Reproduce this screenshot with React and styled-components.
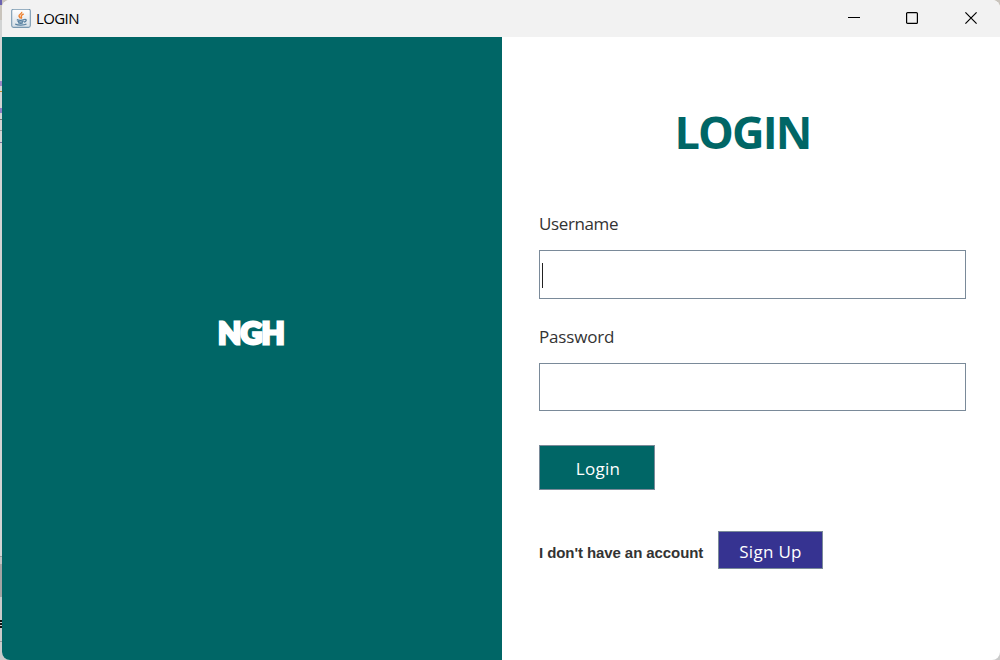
import React from 'react';
import styled, { createGlobalStyle } from 'styled-components';

const GlobalStyle = createGlobalStyle`
  * { box-sizing: border-box; }
  body { margin: 0; overflow: hidden; background: #d0d0d0; font-family: 'Open Sans', sans-serif; }
`;

const Desktop = styled.div`
  position: relative;
  display: flex;
  width: 1000px;
  height: 660px;
  padding-left: 2px;
  background: linear-gradient(#c9c4bc 0 20px, #d2d4d4 20px 556px, #999 556px 557px, #c2c2c2 557px 564px, #a3a3a3 564px 597px, #cacaca 597px);
`;

const Speck = styled.i`
  position: absolute;
  left: 0;
  top: ${(p) => p.$top}px;
  width: 2px;
  height: ${(p) => p.$size || 1}px;
  background: ${(p) => p.$color};
`;

const Window = styled.div`
  display: flex;
  flex-direction: column;
  flex: 1;
  overflow: hidden;
  border-radius: 8px;
  background: #fff;
`;

const TitleBar = styled.header`
  display: flex;
  align-items: center;
  height: 37px;
  padding-left: 9px;
  background: #f2f2f2;
`;

const WindowTitle = styled.span`
  flex: 1;
  padding: 0 0 2px 5px;
  color: #000;
  font-size: 15px;
  line-height: 20px;
  letter-spacing: -0.6px;
`;

const Control = styled.span`
  display: flex;
  align-items: center;
  justify-content: center;
  width: 58.5px;
  height: 36px;
  padding-bottom: 1px;
`;

const Body = styled.div`
  display: flex;
  flex: 1;
`;

const Brand = styled.aside`
  display: flex;
  align-items: center;
  justify-content: center;
  width: 500px;
  padding: 0 2px 34px 0;
  background: #006666;
`;

const BrandName = styled.span`
  color: #fff;
  font: 900 30px/40px Lato, sans-serif;
  letter-spacing: -0.7px;
  -webkit-text-stroke: 2.8px #fff;
`;

const Form = styled.main`
  display: flex;
  flex-direction: column;
  width: 498px;
  padding: 65px 34px 0 37px;
`;

const Heading = styled.h1`
  width: 427px;
  margin: 0 0 50px;
  padding-right: 20px;
  color: #006666;
  font-size: 45px;
  font-weight: 700;
  line-height: 60px;
  letter-spacing: -1.9px;
  text-align: center;
`;

const Label = styled.label`
  height: 24px;
  margin-top: ${(p) => p.$gap || 0}px;
  margin-bottom: 14px;
  color: #333;
  font-size: 17px;
  line-height: 24px;
  letter-spacing: ${(p) => p.$spacing}px;
`;

const Field = styled.div`
  display: flex;
  align-items: center;
  width: 427px;
  height: ${(p) => p.$height}px;
  padding-left: 2px;
  border: 1px solid #7a8a99;
`;

const Caret = styled.span`
  width: 1px;
  height: 25px;
  margin-top: 2px;
  background: #222;
`;

const Button = styled.button`
  width: ${(p) => p.$width}px;
  height: ${(p) => p.$height}px;
  padding: ${(p) => p.$drop}px 0 0 ${(p) => p.$inset}px;
  border: 1px solid #7a8a99;
  background: ${(p) => p.$color};
  color: #fff;
  font: 400 17px/24px 'Open Sans', sans-serif;
  letter-spacing: 0.3px;
`;

const LoginRow = styled.div`
  display: flex;
  padding-top: 34px;
`;

const SignUpRow = styled.div`
  display: flex;
  align-items: center;
  padding-top: 41px;
`;

const Prompt = styled.span`
  width: 179px;
  padding-top: 5px;
  color: #333;
  font: 700 15px/20px 'Liberation Sans', Arial, sans-serif;
  letter-spacing: -0.08px;
  white-space: nowrap;
`;

const JavaIcon = () => (
  <svg width="20" height="20" viewBox="0 0 20 20" fill="none">
    <defs>
      <linearGradient id="tile" x1="0" y1="0" x2="0" y2="1">
        <stop offset="0" stopColor="#fff" />
        <stop offset="1" stopColor="#d5dfe7" />
      </linearGradient>
    </defs>
    <rect x=".7" y=".2" width="18.6" height="18.2" rx="1.8" fill="url(#tile)" stroke="#7898b0" strokeWidth="1.1" />
    <path d="M10.6 2.8c1.2 1.6-3 2.6-2.6 4.3.2.9 1.2 1.4 1.5 2.4M12.7 5c-1.8.7-3 1.6-2.3 2.7.5.8.2 1.4-.5 2" stroke="#ee8130" strokeWidth="1.4" />
    <path d="M5.8 10.6c1.8.8 5.6.7 7.4 0M6.5 12.2c1.7.8 4.7.8 6 0M7 13.7c1.5.6 4 .6 5 0M13.2 10.5c3-.5 2.5 2-.3 2.6M4.2 15c2.5 1.5 9 1.4 11.3 0" stroke="#557f9f" strokeWidth="1.2" />
  </svg>
);

export default function App() {
  return (
    <>
      <GlobalStyle />
      <Desktop>
        <Speck $top={0} $size={5} $color="#6a62b0" />
        <Speck $top={81} $size={5} $color="#9a86c4" />
        <Speck $top={91} $color="#b98a28" />
        <Speck $top={108} $size={5} $color="#9080c4" />
        <Speck $top={119} $color="#777" />
        <Speck $top={130} $color="#999" />
        <Speck $top={142} $color="#777099" />
        <Speck $top={620} $size={2} $color="#111" />
        <Speck $top={623} $size={2} $color="#111" />
        <Speck $top={626} $size={2} $color="#111" />
        <Speck $top={641} $color="#999" />
        <Window>
          <TitleBar>
            <JavaIcon />
            <WindowTitle>LOGIN</WindowTitle>
            <Control>
              <svg width="12" height="12"><path d="M0 5.5h12" stroke="#000" /></svg>
            </Control>
            <Control>
              <svg width="12" height="12"><rect x=".6" y=".6" width="10.8" height="10.8" rx="1" fill="none" stroke="#000" strokeWidth="1.2" /></svg>
            </Control>
            <Control>
              <svg width="12" height="12"><path d="M.4.4l11.2 11.2M11.6.4L.4 11.6" stroke="#000" strokeWidth="1.2" /></svg>
            </Control>
          </TitleBar>
          <Body>
            <Brand>
              <BrandName>NGH</BrandName>
            </Brand>
            <Form>
              <Heading>LOGIN</Heading>
              <Label $spacing={-0.38}>Username</Label>
              <Field $height={49}><Caret /></Field>
              <Label $gap={26} $spacing={-0.18}>Password</Label>
              <Field $height={48} />
              <LoginRow>
                <Button $width={116} $height={45} $drop={2} $inset={2} $color="#006666">Login</Button>
              </LoginRow>
              <SignUpRow>
                <Prompt>I don't have an account</Prompt>
                <Button $width={105} $height={38} $drop={4} $inset={0} $color="#363391">Sign Up</Button>
              </SignUpRow>
            </Form>
          </Body>
        </Window>
      </Desktop>
    </>
  );
}
